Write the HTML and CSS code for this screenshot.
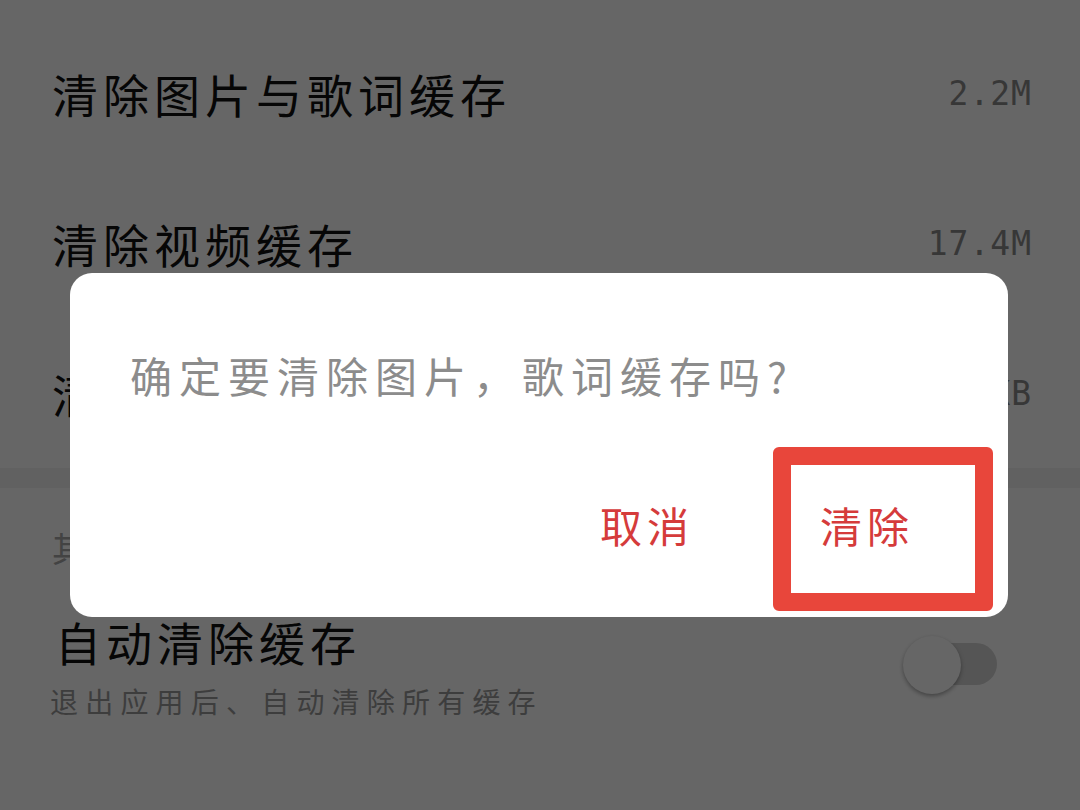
FILE: index.html
```html
<!DOCTYPE html>
<html lang="zh-CN">
<head>
<meta charset="utf-8">
<title>缓存设置</title>
<link rel="stylesheet" href="styles.css">
</head>
<body>
<main class="page">
  <section class="list">
    <div class="row">
      <span class="row-title">清除图片与歌词缓存</span>
      <span class="row-value">2.2M</span>
    </div>
    <div class="row">
      <span class="row-title">清除视频缓存</span>
      <span class="row-value">17.4M</span>
    </div>
    <div class="row">
      <span class="row-title">清除音乐缓存</span>
      <span class="row-value">0KB</span>
    </div>
  </section>
  <div class="gap"></div>
  <section class="list other">
    <div class="section-head">其他</div>
    <div class="row-auto">
      <div class="auto-text">
        <span class="row-title">自动清除缓存</span>
        <span class="row-sub">退出应用后、自动清除所有缓存</span>
      </div>
      <div class="toggle"><span class="knob"></span></div>
    </div>
  </section>
</main>

<div class="scrim"></div>

<div class="dialog">
  <p class="dialog-msg">确定要清除图片，歌词缓存吗?</p>
  <div class="dialog-actions">
    <span class="btn">取消</span>
    <span class="btn">清除</span>
  </div>
  <div class="highlight"></div>
</div>
</body>
</html>
```

FILE: styles.css
```css
html, body {
  margin: 0;
  padding: 0;
  width: 1080px;
  height: 810px;
  overflow: hidden;
  background: #ffffff;
  font-family: "Noto Sans CJK SC", "Noto Sans", sans-serif;
}

.page {
  width: 1080px;
  height: 810px;
  background: #ffffff;
  display: flex;
  flex-direction: column;
}

.list {
  display: flex;
  flex-direction: column;
}

.list:first-child {
  padding-top: 18px;
}

.row {
  height: 150px;
  display: flex;
  align-items: center;
  justify-content: space-between;
  padding: 0 49px 0 52px;
}

.row-title {
  font-size: 46px;
  line-height: 46px;
  letter-spacing: 5px;
  color: #111111;
}

.row-value {
  font-family: "DejaVu Sans Mono", "Liberation Mono", monospace;
  font-size: 33px;
  line-height: 33px;
  color: #8a8a8a;
  letter-spacing: 1px;
  margin-right: -1px;
}

.gap {
  height: 20px;
  background: #f2f2f2;
}

.other {
  padding: 0 83px 0 52px;
}

.section-head {
  padding-top: 42px;
  font-size: 34px;
  line-height: 36px;
  letter-spacing: 4px;
  color: #a8a8a8;
}

.row-auto {
  margin-top: 52px;
  display: flex;
  align-items: center;
  justify-content: space-between;
}

.auto-text {
  display: flex;
  flex-direction: column;
  gap: 22px;
}

.row-auto .row-title {
  margin-left: 3px;
}

.row-sub {
  font-size: 28px;
  line-height: 30px;
  letter-spacing: 7.2px;
  color: #9a9a9a;
  margin-left: -2px;
}

.toggle {
  position: relative;
  width: 92px;
  height: 42px;
  border-radius: 21px;
  background: #d4d4d4;
  margin-top: -6px;
}

.knob {
  position: absolute;
  left: -2px;
  top: -7px;
  width: 58px;
  height: 58px;
  border-radius: 50%;
  background: #ffffff;
  box-shadow: 0 2px 4px rgba(0, 0, 0, 0.35);
}

.scrim {
  position: fixed;
  inset: 0;
  background: rgba(0, 0, 0, 0.6);
}

.dialog {
  position: fixed;
  left: 70px;
  top: 273px;
  width: 938px;
  height: 344px;
  border-radius: 22px;
  background: #ffffff;
  display: flex;
  flex-direction: column;
}

.dialog-msg {
  margin: 0;
  padding: 81px 0 0 60px;
  font-size: 42px;
  line-height: 42px;
  letter-spacing: 7px;
  color: #8c8c8c;
}

.dialog-actions {
  margin-top: 108px;
  display: flex;
  justify-content: flex-end;
  gap: 126px;
  padding-right: 94px;
}

.btn {
  font-size: 42px;
  line-height: 42px;
  letter-spacing: 5px;
  color: #d53b3b;
}

.highlight {
  position: absolute;
  left: 703px;
  top: 174px;
  width: 220px;
  height: 164px;
  box-sizing: border-box;
  border: 18px solid #e8463b;
  border-radius: 6px;
}
```
